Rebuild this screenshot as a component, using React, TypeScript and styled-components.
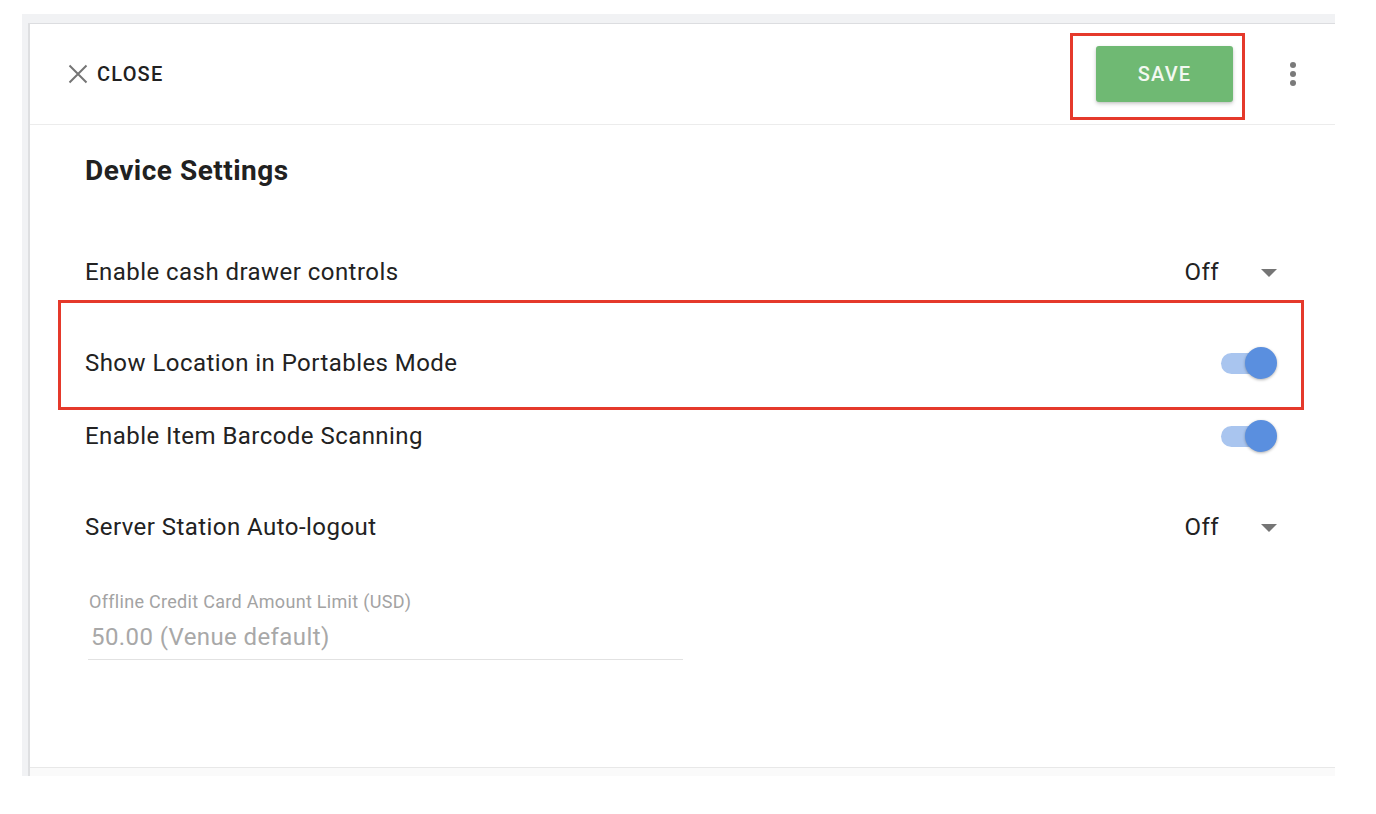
import React from "react";
import styled, { createGlobalStyle } from "styled-components";

const GlobalStyle = createGlobalStyle`
  html, body {
    margin: 0;
    padding: 0;
    background: #ffffff;
    font-family: Roboto, "Liberation Sans", Arial, sans-serif;
  }
  * { box-sizing: border-box; }
`;

const Page = styled.div`
  padding: 14px 0 0 22px;
  width: 1376px;
  height: 814px;
`;

const Frame = styled.div`
  width: 1313px;
  height: 762px;
  background: #f1f2f4;
  padding: 9px 0 0 6px;
  display: flex;
`;

const Column = styled.div`
  flex: 1;
  display: flex;
  flex-direction: column;
  border-left: 2px solid #dedfe1;
`;

const Panel = styled.div`
  flex: 1;
  background: #ffffff;
  border-top: 1px solid #dcdde0;
  display: flex;
  flex-direction: column;
`;

const FooterStrip = styled.div`
  height: 9px;
  background: #fafafa;
  border-top: 1px solid #e8e8e8;
`;

const Header = styled.div`
  height: 101px;
  display: flex;
  align-items: center;
  padding: 0 30px 0 38px;
  border-bottom: 1px solid #ececec;
`;

const CloseButton = styled.button`
  display: flex;
  align-items: center;
  gap: 9px;
  border: none;
  background: none;
  padding: 0;
  cursor: pointer;
  font-family: Roboto, "Liberation Sans", Arial, sans-serif;
  font-size: 20px;
  font-weight: 500;
  letter-spacing: 1.2px;
  color: #212121;
`;

const Anchor = styled.div`
  position: relative;
  margin-left: auto;
  display: flex;
`;

const SaveButton = styled.button`
  width: 137px;
  height: 56px;
  border: none;
  border-radius: 3px;
  background: #6fb973;
  color: #f3f8f1;
  font-family: Roboto, "Liberation Sans", Arial, sans-serif;
  font-size: 20px;
  font-weight: 500;
  letter-spacing: 1.2px;
  box-shadow: 0 2px 4px rgba(0, 0, 0, 0.18), 0 1px 2px rgba(0, 0, 0, 0.08);
  cursor: pointer;
`;

const Highlight = styled.div<{ $top: number; $left: number; $right: number; $bottom: number }>`
  position: absolute;
  top: ${(p) => p.$top}px;
  left: ${(p) => p.$left}px;
  right: ${(p) => p.$right}px;
  bottom: ${(p) => p.$bottom}px;
  border: 3px solid #e5392b;
  pointer-events: none;
`;

const Kebab = styled.div`
  margin-left: 48px;
  width: 24px;
  display: flex;
  flex-direction: column;
  align-items: center;
  gap: 3px;
`;

const Dot = styled.span`
  width: 6px;
  height: 6px;
  border-radius: 50%;
  background: #7a7a7a;
`;

const Body = styled.div`
  padding: 30px 55px 0 55px;
  display: flex;
  flex-direction: column;
`;

const Title = styled.h2`
  margin: 0;
  height: 32px;
  line-height: 32px;
  font-size: 28px;
  font-weight: 700;
  letter-spacing: 0.5px;
  color: #212121;
`;

const Row = styled.div<{ $mt: number }>`
  position: relative;
  margin-top: ${(p) => p.$mt}px;
  height: 48px;
  display: flex;
  align-items: center;
  justify-content: space-between;
`;

const Label = styled.span`
  font-size: 24px;
  letter-spacing: 0.45px;
  color: #222222;
`;

const Select = styled.div`
  display: flex;
  align-items: center;
  gap: 42px;
  padding-right: 3px;
`;

const SelectValue = styled.span`
  font-size: 24px;
  letter-spacing: 0.45px;
  color: #222222;
`;

const Caret = styled.span`
  width: 0;
  height: 0;
  border-left: 8.5px solid transparent;
  border-right: 8.5px solid transparent;
  border-top: 8px solid #757575;
  margin-top: 1px;
`;

const Switch = styled.div`
  position: relative;
  width: 57px;
  height: 32px;
  margin-right: 2px;
`;

const Track = styled.span`
  position: absolute;
  left: 0;
  top: 6px;
  width: 48px;
  height: 21px;
  border-radius: 11px;
  background: #a9c5ef;
`;

const Knob = styled.span`
  position: absolute;
  right: 1px;
  top: 0;
  width: 32px;
  height: 32px;
  border-radius: 50%;
  background: #5a8fdf;
  box-shadow: 0 1px 3px rgba(0, 0, 0, 0.3);
`;

const Field = styled.div`
  margin-top: 41px;
  margin-left: 3px;
  width: 595px;
  display: flex;
  flex-direction: column;
`;

const FieldLabel = styled.span`
  font-size: 18px;
  line-height: 20px;
  letter-spacing: 0.3px;
  color: #a3a3a3;
  padding-left: 1px;
`;

const FieldValue = styled.div`
  margin-top: 10px;
  font-size: 24px;
  line-height: 30px;
  letter-spacing: 0.4px;
  color: #a8a8a8;
  padding: 0 0 7px 3px;
  border-bottom: 1px solid #e2e2e2;
`;

const CloseIcon = () => (
  <svg width="20" height="20" viewBox="0 0 20 20">
    <path d="M1.5 1.5 L18.5 18.5 M18.5 1.5 L1.5 18.5" stroke="#757575" strokeWidth="2" fill="none" />
  </svg>
);

const Toggle = () => (
  <Switch>
    <Track />
    <Knob />
  </Switch>
);

const Dropdown = ({ value }: { value: string }) => (
  <Select>
    <SelectValue>{value}</SelectValue>
    <Caret />
  </Select>
);

export default function App() {
  return (
    <>
      <GlobalStyle />
      <Page>
        <Frame>
          <Column>
            <Panel>
              <Header>
                <CloseButton>
                  <CloseIcon />
                  CLOSE
                </CloseButton>
                <Anchor>
                  <SaveButton>SAVE</SaveButton>
                  <Highlight $top={-13} $left={-26} $right={-12} $bottom={-18} />
                </Anchor>
                <Kebab>
                  <Dot />
                  <Dot />
                  <Dot />
                </Kebab>
              </Header>
              <Body>
                <Title>Device Settings</Title>
                <Row $mt={61}>
                  <Label>Enable cash drawer controls</Label>
                  <Dropdown value="Off" />
                </Row>
                <Row $mt={43}>
                  <Label>Show Location in Portables Mode</Label>
                  <Toggle />
                  <Highlight $top={-39} $left={-27} $right={-24} $bottom={-23} />
                </Row>
                <Row $mt={25}>
                  <Label>Enable Item Barcode Scanning</Label>
                  <Toggle />
                </Row>
                <Row $mt={43}>
                  <Label>Server Station Auto-logout</Label>
                  <Dropdown value="Off" />
                </Row>
                <Field>
                  <FieldLabel>Offline Credit Card Amount Limit (USD)</FieldLabel>
                  <FieldValue>50.00 (Venue default)</FieldValue>
                </Field>
              </Body>
            </Panel>
            <FooterStrip />
          </Column>
        </Frame>
      </Page>
    </>
  );
}
